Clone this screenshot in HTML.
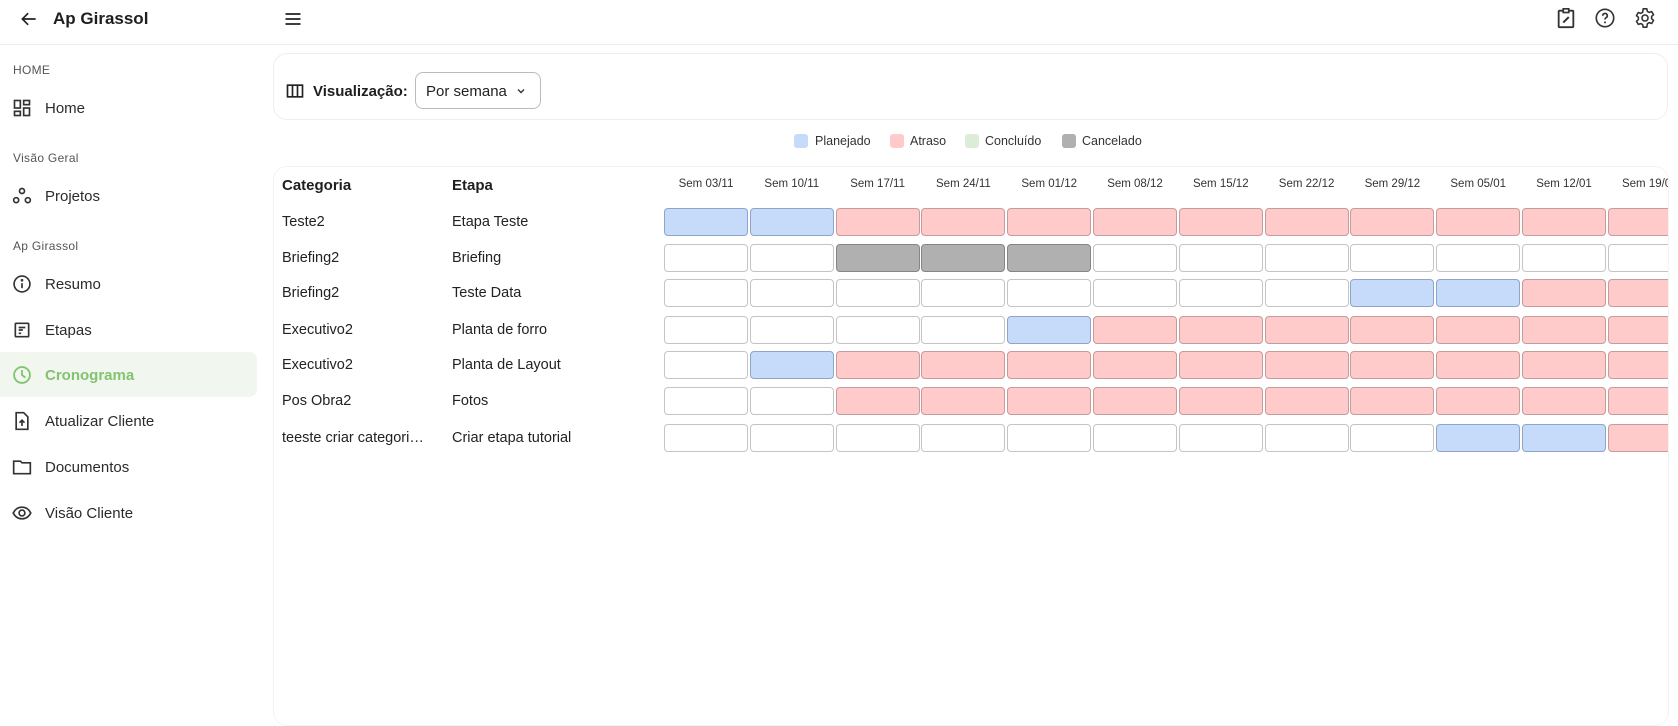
<!DOCTYPE html>
<html><head><meta charset="utf-8"><style>
*{box-sizing:border-box;margin:0;padding:0}
body{width:1678px;height:664px;overflow:hidden;background:#fff;font-family:"Liberation Sans",sans-serif;color:#1f1f1f;position:relative}
.a{position:absolute;white-space:nowrap}
.nav{position:absolute;left:45px;font-size:15px;color:#2b2b2b}
.sec{position:absolute;left:13px;font-size:12px;color:#555;letter-spacing:.3px}
.ic{position:absolute;left:12px}
.lbl{position:absolute;font-size:14.5px;color:#222}
.cell{position:absolute;height:28px;width:84px;border-radius:4px;border:1px solid #c4c4c4;background:#fff}
.B{background:#c6dafa;border-color:#8ea5c9}
.R{background:#ffcaca;border-color:#c49c9c}
.G{background:#b0b0b0;border-color:#858585}
.hd{position:absolute;top:177px;font-size:11.5px;color:#333;width:86px;text-align:center}
</style></head><body>
<div class="a" style="left:0;top:44px;width:1678px;height:1px;background:#ececec"></div>
<svg class="a" style="left:19px;top:9px" width="20" height="20" viewBox="0 0 24 24"><path d="M20 12H5M11 5l-7 7 7 7" fill="none" stroke="#222" stroke-width="2"/></svg>
<div class="a" style="left:53px;top:9px;font-size:17px;font-weight:bold">Ap Girassol</div>
<svg class="a" style="left:283px;top:9px" width="20" height="20" viewBox="0 0 24 24"><path d="M3 6h18M3 12h18M3 18h18" stroke="#222" stroke-width="2"/></svg>
<svg class="a" style="left:1555px;top:7px" width="22" height="22" viewBox="0 0 24 24"><rect x="4" y="4" width="16" height="18" rx="1" fill="none" stroke="#333" stroke-width="2"/><rect x="9" y="2" width="6" height="4" fill="#fff" stroke="#333" stroke-width="1.8"/><path d="M9 17l6-6" stroke="#333" stroke-width="2.2"/></svg>
<svg class="a" style="left:1594px;top:7px" width="22" height="22" viewBox="0 0 24 24"><circle cx="12" cy="12" r="9.5" fill="none" stroke="#333" stroke-width="1.8"/><path d="M9.5 9.5a2.5 2.5 0 1 1 3.5 2.3c-.8.4-1 1-1 1.9" fill="none" stroke="#333" stroke-width="1.8"/><circle cx="12" cy="16.8" r="1.1" fill="#333"/></svg>
<svg class="a" style="left:1634px;top:7px" width="22" height="22" viewBox="0 0 24 24"><path d="M10 2h4l.6 2.8 2 1.1 2.7-.9 2 3.4-2.1 1.9v2.4l2.1 1.9-2 3.4-2.7-.9-2 1.1L14 22h-4l-.6-2.8-2-1.1-2.7.9-2-3.4 2.1-1.9v-2.4L2.7 9.4l2-3.4 2.7.9 2-1.1z" fill="none" stroke="#333" stroke-width="1.7" stroke-linejoin="round"/><circle cx="12" cy="12" r="3.3" fill="none" stroke="#333" stroke-width="1.7"/></svg>

<div class="sec" style="top:63px">HOME</div>
<svg class="ic" style="top:98px" width="20" height="20" viewBox="0 0 24 24" fill="none" stroke="#333" stroke-width="2"><rect x="3" y="3" width="7" height="9"/><rect x="14" y="3" width="7" height="5"/><rect x="14" y="12" width="7" height="9"/><rect x="3" y="16" width="7" height="5"/></svg>
<div class="nav" style="top:100px">Home</div>
<div class="sec" style="top:151px">Visão Geral</div>
<svg class="ic" style="top:186px" width="20" height="20" viewBox="0 0 24 24" fill="none" stroke="#333" stroke-width="2"><circle cx="12" cy="6" r="3"/><circle cx="5" cy="17" r="3"/><circle cx="19" cy="17" r="3"/></svg>
<div class="nav" style="top:188px">Projetos</div>
<div class="sec" style="top:239px">Ap Girassol</div>
<svg class="ic" style="top:274px" width="20" height="20" viewBox="0 0 24 24" fill="none" stroke="#333" stroke-width="2"><circle cx="12" cy="12" r="9.5"/><path d="M12 11v6"/><circle cx="12" cy="7.5" r=".6" fill="#333"/></svg>
<div class="nav" style="top:276px">Resumo</div>
<svg class="ic" style="top:320px" width="20" height="20" viewBox="0 0 24 24" fill="none" stroke="#333" stroke-width="2"><rect x="4" y="4" width="16" height="16" rx="1"/><path d="M8 9h8M8 12h5M8 16h3"/></svg>
<div class="nav" style="top:322px">Etapas</div>
<div class="a" style="left:0;top:352px;width:257px;height:45px;background:#f1f6ee;border-radius:0 8px 8px 0"></div>
<svg class="ic" style="top:365px" width="20" height="20" viewBox="0 0 24 24" fill="none" stroke="#82c46f" stroke-width="2.2"><circle cx="12" cy="12" r="9.5"/><path d="M12 6v6l4 3"/></svg>
<div class="nav" style="top:367px;color:#82c46f;font-weight:bold">Cronograma</div>
<svg class="ic" style="top:411px" width="20" height="20" viewBox="0 0 24 24" fill="none" stroke="#333" stroke-width="2"><path d="M5 2h9l5 5v15H5z"/><path d="M12 18v-6M9 14l3-3 3 3"/></svg>
<div class="nav" style="top:413px">Atualizar Cliente</div>
<svg class="ic" style="top:457px" width="20" height="20" viewBox="0 0 24 24" fill="none" stroke="#333" stroke-width="2"><path d="M2 5h8l2 2h10v13H2z"/></svg>
<div class="nav" style="top:459px">Documentos</div>
<svg class="ic" style="top:503px" width="20" height="20" viewBox="0 0 24 24" fill="none" stroke="#333" stroke-width="2"><path d="M1.5 12C4 7 8 5 12 5s8 2 10.5 7C20 17 16 19 12 19s-8-2-10.5-7z"/><circle cx="12" cy="12" r="3.5"/></svg>
<div class="nav" style="top:505px">Visão Cliente</div>

<div class="a" style="left:273px;top:53px;width:1395px;height:67px;border:1px solid #eee;border-radius:14px"></div>
<svg class="a" style="left:285px;top:81px" width="20" height="20" viewBox="0 0 24 24" fill="none" stroke="#222" stroke-width="2"><rect x="3" y="5" width="18" height="14"/><path d="M9 5v14M15 5v14"/></svg>
<div class="a" style="left:313px;top:83px;font-size:15px;font-weight:bold">Visualização:</div>
<div class="a" style="left:415px;top:72px;width:126px;height:37px;border:1px solid #bbb;border-radius:8px"></div>
<div class="a" style="left:426px;top:83px;font-size:15px;color:#222">Por semana</div>
<svg class="a" style="left:515px;top:85px" width="12" height="12" viewBox="0 0 12 12"><path d="M3 4.5l3 3 3-3" fill="none" stroke="#333" stroke-width="1.4"/></svg>

<div class="a" style="left:794px;top:134px;width:14px;height:14px;border-radius:3px;background:#c6dafa"></div>
<div class="a" style="left:815px;top:134px;font-size:12.5px;color:#333">Planejado</div>
<div class="a" style="left:890px;top:134px;width:14px;height:14px;border-radius:3px;background:#ffcaca"></div>
<div class="a" style="left:910px;top:134px;font-size:12.5px;color:#333">Atraso</div>
<div class="a" style="left:965px;top:134px;width:14px;height:14px;border-radius:3px;background:#dcecd6"></div>
<div class="a" style="left:985px;top:134px;font-size:12.5px;color:#333">Concluído</div>
<div class="a" style="left:1062px;top:134px;width:14px;height:14px;border-radius:3px;background:#b0b0b0"></div>
<div class="a" style="left:1082px;top:134px;font-size:12.5px;color:#333">Cancelado</div>

<div class="a" style="left:273px;top:166px;width:1396px;height:560px;border:1px solid #f3f3f3;border-radius:14px;overflow:hidden">
<div style="position:absolute;left:0;top:0;width:1396px;height:560px">
<div class="a" style="left:8px;top:10px;font-size:15px;font-weight:bold">Categoria</div>
<div class="a" style="left:178px;top:10px;font-size:15px;font-weight:bold">Etapa</div>
<div id="g"></div>
</div></div>
<script>
var weeks=["03/11","10/11","17/11","24/11","01/12","08/12","15/12","22/12","29/12","05/01","12/01","19/01"];
var rows=[["Teste2","Etapa Teste","BBRRRRRRRRRR"],["Briefing2","Briefing","WWGGGWWWWWWW"],["Briefing2","Teste Data","WWWWWWWWBBRR"],["Executivo2","Planta de forro","WWWWBRRRRRRR"],["Executivo2","Planta de Layout","WBRRRRRRRRRR"],["Pos Obra2","Fotos","WWRRRRRRRRRR"],["teeste criar categori…","Criar etapa tutorial","WWWWWWWWWBBR"]];
var h="",X0=663-273,Y0=-166;
weeks.forEach(function(w,i){h+='<div class="hd" style="left:'+(X0+i*85.8-1)+'px;top:'+(177+Y0)+'px">Sem '+w+'</div>';});
var tops=[207,243,278,315,350,386,423];
rows.forEach(function(r,j){var t=tops[j]+Y0;
h+='<div class="lbl" style="left:8px;top:'+(t+6)+'px">'+r[0]+'</div><div class="lbl" style="left:178px;top:'+(t+6)+'px">'+r[1]+'</div>';
for(var i=0;i<12;i++)h+='<div class="cell '+r[2][i]+'" style="left:'+(X0+i*85.8)+'px;top:'+t+'px"></div>';});
document.getElementById("g").innerHTML=h;
</script>
</body></html>
